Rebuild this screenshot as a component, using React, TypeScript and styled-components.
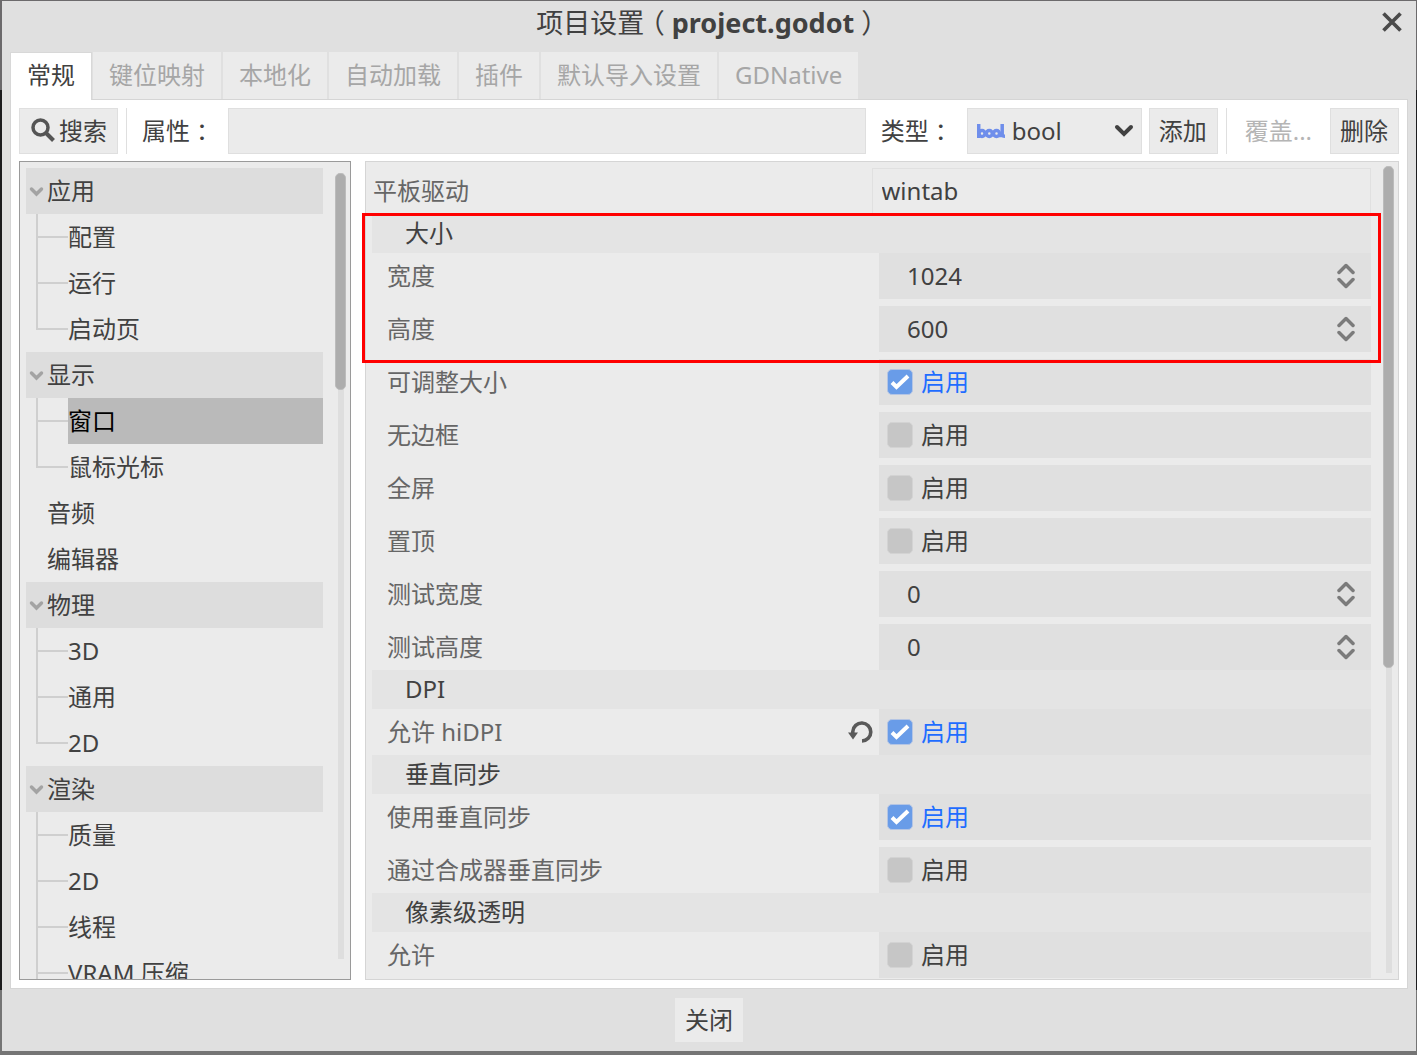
import React, { useState } from "react";
import styled, { createGlobalStyle } from "styled-components";

const FONT = '"Noto Sans", "Noto Sans CJK SC", sans-serif';
const INK = "#414141";

const GlobalStyle = createGlobalStyle`
  *, *::before, *::after { box-sizing: border-box; }
  body {
    margin: 0;
    background: linear-gradient(#6c6a6c 0 90px, #1c1c1e 90px calc(100vh - 65px), #757575 calc(100vh - 65px));
    font-family: ${FONT};
    font-size: 24px;
    line-height: 32px;
    color: ${INK};
  }
  button, input, select { font: inherit; color: inherit; margin: 0; }
  button { cursor: pointer; }
`;

const Screen = styled.div`
  height: 100vh;
  padding: 1px 1px 4px 2px;
`;

const Dialog = styled.div`
  height: 100%;
  display: flex;
  flex-direction: column;
  background: #e0e0e0;
  padding: 0 8px;
`;

const TitleBar = styled.header`
  display: grid;
  grid-template-columns: 32px 1fr 32px;
  align-items: center;
  height: 51px;
  padding-bottom: 8px;
`;

const Title = styled.h1`
  grid-column: 2;
  margin: 0;
  text-align: center;
  font-size: 27px;
  line-height: 36px;
  font-weight: 400;
`;

const Paren = styled.span`
  padding: 0 7px;
  font-family: "Noto Sans CJK SC", sans-serif;
  font-feature-settings: "halt";
`;

const CloseIconButton = styled.button`
  display: flex;
  align-items: center;
  justify-content: center;
  height: 32px;
  padding: 0 0 2px;
  border: 0;
  background: none;
`;

const Tabs = styled.nav`
  display: flex;
  height: 47px;
`;

const Tab = styled.button<{ $active?: boolean }>`
  position: relative;
  height: ${(p) => (p.$active ? 48 : 47)}px;
  margin-right: ${(p) => (p.$active ? 1 : 0)}px;
  padding: 0 16px ${(p) => (p.$active ? 4 : 2)}px;
  border: solid #d8d8d8;
  border-width: ${(p) => (p.$active ? "1px 1px 0" : "0")};
  border-right: ${(p) => (p.$active ? "1px solid #d8d8d8" : "2px solid #e0e0e0")};
  background: ${(p) => (p.$active ? "#fff" : "#ebebeb")};
  color: ${(p) => (p.$active ? INK : "#a6a6a6")};
  white-space: nowrap;
`;

const Page = styled.main`
  flex: 1;
  min-height: 0;
  display: flex;
  flex-direction: column;
  gap: 7px;
  padding: 8px;
  border: 1px solid #d5d5d5;
  background: #fff;
`;

const Toolbar = styled.div`
  display: flex;
  gap: 7px;
  height: 46px;
`;

const Button = styled.button<{ $flat?: boolean }>`
  display: flex;
  align-items: center;
  justify-content: center;
  gap: 4px;
  padding: ${(p) => (p.$flat ? "0 10px" : "0 10px 0 9px")};
  border: 1px solid ${(p) => (p.$flat ? "transparent" : "#dfdfdf")};
  background: ${(p) => (p.$flat ? "none" : "#ebebeb")};
  white-space: nowrap;
  &:disabled { color: #b5b5b5; cursor: default; }
`;

const SearchButton = styled(Button)`
  padding: 0 10px 0 11px;
  svg { margin-top: -2px; }
`;

const Divider = styled.span`
  width: 1px;
  margin-left: 1px;
  background: #dfdfdf;
`;

const FieldLabel = styled.label`
  display: flex;
  align-items: center;
  padding: 0 7px 0 8px;
  white-space: nowrap;
`;

const Colon = styled.span`
  font-family: "Noto Sans CJK TC", sans-serif;
`;

const PropertyInput = styled.input`
  flex: 1;
  min-width: 0;
  padding: 0 9px;
  border: 1px solid #dfdfdf;
  background: #ebebeb;
  outline: none;
`;

const TypeBox = styled.div`
  display: grid;
  grid-template-columns: 46px 1fr 27px;
  align-items: center;
  width: 175px;
  border: 1px solid #dfdfdf;
  background: #ebebeb;
  svg { grid-row: 1; pointer-events: none; }
  svg:first-child { grid-column: 1; justify-self: center; }
  svg:last-child { grid-column: 3; }
`;

const TypeSelect = styled.select`
  grid-area: 1 / 1 / 2 / 4;
  height: 44px;
  padding: 0 32px 0 44px;
  border: 0;
  appearance: none;
  background: none;
  outline: none;
`;

const Panels = styled.div`
  flex: 1;
  min-height: 0;
  display: grid;
  grid-template-columns: 332px minmax(0, 1fr);
  gap: 14px;
`;

const Sidebar = styled.aside`
  display: flex;
  gap: 12px;
  min-height: 0;
  padding: 6px 4px 0 6px;
  border: 1px solid #9a9a9a;
  background: #ebebeb;
  overflow: hidden;
`;

const Tree = styled.div`
  flex: 1;
  min-width: 0;
`;

const GroupRow = styled.button<{ $shaded: boolean }>`
  display: grid;
  grid-template-columns: 21px 1fr;
  align-items: center;
  width: 100%;
  height: 46px;
  padding: 0;
  border: 0;
  text-align: left;
  background: ${(p) => (p.$shaded ? "#dddddd" : "none")};
  span { grid-column: 2; }
`;

const LeafRow = styled.div`
  display: grid;
  grid-template-columns: 32px 1fr;
  height: 46px;
  padding-left: 10px;
`;

const Branch = styled.span<{ $last?: boolean }>`
  display: grid;
  grid-template-rows: 24px 22px;
  &::before {
    content: "";
    border: solid #cfcfcf;
    border-width: 0 0 2px 2px;
  }
  &::after {
    content: "";
    border-left: 2px solid ${(p) => (p.$last ? "transparent" : "#cfcfcf")};
  }
`;

const Leaf = styled.button<{ $selected?: boolean }>`
  padding: 0;
  border: 0;
  text-align: left;
  white-space: nowrap;
  background: ${(p) => (p.$selected ? "#bababa" : "none")};
  color: ${(p) => (p.$selected ? "#000" : INK)};
`;

const Track = styled.div<{ $inset: number; $end: number }>`
  flex: none;
  display: flex;
  justify-content: center;
  width: 11px;
  margin: ${(p) => p.$inset}px 0 ${(p) => p.$end}px;
  background: linear-gradient(#dedede, #dedede) center / 6px 100% no-repeat;
`;

const Thumb = styled.div<{ $share: number }>`
  width: 11px;
  height: ${(p) => p.$share}%;
  border: 1px solid #bcbcbc;
  border-radius: 5px;
  background: #adadad;
`;

const Inspector = styled.section`
  display: flex;
  gap: 12px;
  min-height: 0;
  padding: 4px 4px 0 6px;
  border: 1px solid #d5d5d5;
  background: #ebebeb;
  overflow-x: visible;
  overflow-y: clip;
`;

const Properties = styled.div`
  flex: 1;
  min-width: 0;
  padding-top: 2px;
`;

const Row = styled.div`
  display: grid;
  grid-template-columns: 1fr 1fr;
  height: 46px;
`;

const RowLabel = styled.label`
  display: flex;
  align-items: center;
  color: #666;
`;

const TopRow = styled(Row)`
  ${RowLabel} { padding-left: 1px; }
`;

const TextValue = styled.input`
  width: 100%;
  padding: 0 9px;
  border: 1px solid #e0e0e0;
  background: none;
  outline: none;
`;

const Rows = styled.div`
  display: grid;
  gap: 7px;
  padding-left: 15px;
`;

const MoreRows = styled(Rows)`
  padding-top: 7px;
`;

const Heading = styled.h2`
  margin: 0;
  height: 39px;
  padding: 3px 33px 4px;
  font-size: 24px;
  font-weight: 400;
  background: #e4e4e4;
`;

const Marked = styled.div`
  position: relative;
  &::after {
    content: "";
    position: absolute;
    inset: -1px -10px -11px;
    border: 3px solid #f00;
    pointer-events: none;
  }
`;

const Value = styled.div`
  display: flex;
  align-items: center;
  background: #e0e0e0;
`;

const NumberInput = styled.input`
  flex: 1;
  min-width: 0;
  padding: 0 28px;
  border: 0;
  background: none;
  outline: none;
`;

const Stepper = styled.button`
  display: flex;
  padding: 0 16px 0 0;
  border: 0;
  background: none;
`;

const ResetButton = styled.button`
  display: flex;
  align-items: center;
  padding: 0 6px 0 0;
  margin-left: auto;
  border: 0;
  background: none;
`;

const LabelCell = styled.div`
  display: flex;
`;

const Enable = styled.label<{ $on: boolean }>`
  display: flex;
  align-items: center;
  gap: 8px;
  padding-left: 8px;
  color: ${(p) => (p.$on ? "#1f6dff" : INK)};
`;

const Check = styled.input`
  appearance: none;
  width: 26px;
  height: 26px;
  border-radius: 5px;
  border: 1px solid #d3d3d3;
  background: #c6c6c6;
  &:checked {
    border-color: #b4c5e4;
    background: #699ce8 url("data:image/svg+xml,%3Csvg xmlns='http://www.w3.org/2000/svg' viewBox='0 0 24 24'%3E%3Cpath d='M4 12.5l4.500 4.500L20 6' fill='none' stroke='white' stroke-width='4'/%3E%3C/svg%3E") center / 24px no-repeat;
  }
`;

const Footer = styled.footer`
  display: flex;
  justify-content: center;
  padding: 9px 0;
`;

const FooterButton = styled(Button)`
  height: 44px;
  border-color: #ebebeb;
  padding: 0 9px;
`;

const SearchIcon = () => (
  <svg width="24" height="24" viewBox="0 0 24 24" fill="none" stroke="#555" aria-hidden="true">
    <circle cx="9.500" cy="9.500" r="7.500" strokeWidth="3.500" />
    <path d="M14.500 14.500l8 8" strokeWidth="4" />
  </svg>
);

const BoolIcon = () => (
  <svg width="28" height="15" viewBox="0 0 28 15" fill="none" stroke="#6f8eeb" strokeWidth="3.500" aria-hidden="true">
    <path d="M1.700 0v14M25.200 0v10q0 2.300 2.800 2.300" />
    <circle cx="5" cy="9.500" r="3" />
    <circle cx="12.300" cy="9.500" r="3" />
    <circle cx="19.500" cy="9.500" r="3" />
    <path d="M22 11.500h4" />
  </svg>
);

const Chevron = () => (
  <svg width="20" height="14" viewBox="0 0 20 14" fill="none" stroke={INK} strokeWidth="4" strokeLinecap="round" aria-hidden="true">
    <path d="M3 3l7 7 7-7" />
  </svg>
);

const FoldArrow = () => (
  <svg width="21" height="12" viewBox="0 0 21 12" fill="none" stroke="#a3a3a3" strokeWidth="3.500" strokeLinecap="round" aria-hidden="true">
    <path d="M5.500 4l5 5 5-5" />
  </svg>
);

const UpDown = () => (
  <svg width="18" height="26" viewBox="0 0 18 26" fill="none" stroke="#7b7b7b" strokeWidth="3.500" strokeLinecap="round" strokeLinejoin="round" aria-hidden="true">
    <path d="M2 9.500L9 2.500l7 7M2 16.500l7 7 7-7" />
  </svg>
);

const ResetIcon = () => (
  <svg width="25" height="24" viewBox="0 0 25 24" fill="none" aria-hidden="true">
    <path d="M4.800 13V11.500a9 9 0 1 1 9.200 9.500" stroke="#595959" strokeWidth="3.600" />
    <path d="M0 12.500h10l-5 7z" fill="#595959" />
  </svg>
);

const CloseIcon = () => (
  <svg width="20" height="20" viewBox="0 0 20 20" fill="none" stroke="#4a4a4a" strokeWidth="3.700" aria-hidden="true">
    <path d="M1.500 1.500l17 17M18.500 1.500l-17 17" />
  </svg>
);

const TABS = ["常规", "键位映射", "本地化", "自动加载", "插件", "默认导入设置", "GDNative"];

const TREE: { name: string; children: string[]; continues?: boolean }[] = [
  { name: "应用", children: ["配置", "运行", "启动页"] },
  { name: "显示", children: ["窗口", "鼠标光标"] },
  { name: "音频", children: [] },
  { name: "编辑器", children: [] },
  { name: "物理", children: ["3D", "通用", "2D"] },
  { name: "渲染", children: ["质量", "2D", "线程", "VRAM 压缩"], continues: true },
];

function NumberRow({ id, label, value }: { id: string; label: string; value: string }) {
  return (
    <Row>
      <RowLabel htmlFor={id}>{label}</RowLabel>
      <Value>
        <NumberInput id={id} inputMode="numeric" defaultValue={value} />
        <Stepper type="button" aria-label={label}>
          <UpDown />
        </Stepper>
      </Value>
    </Row>
  );
}

function BoolRow({ id, label, on = false, reset = false }: { id: string; label: string; on?: boolean; reset?: boolean }) {
  const [checked, setChecked] = useState(on);
  return (
    <Row>
      <LabelCell>
        <RowLabel htmlFor={id}>{label}</RowLabel>
        {reset && (
          <ResetButton type="button" aria-label="重置" onClick={() => setChecked(!on)}>
            <ResetIcon />
          </ResetButton>
        )}
      </LabelCell>
      <Value>
        <Enable $on={checked}>
          <Check id={id} type="checkbox" checked={checked} onChange={(e) => setChecked(e.target.checked)} />
          启用
        </Enable>
      </Value>
    </Row>
  );
}

export default function App() {
  const [tab, setTab] = useState("常规");
  const [selected, setSelected] = useState("窗口");

  return (
    <Screen>
      <GlobalStyle />
      <Dialog role="dialog" aria-labelledby="dialog-title">
        <TitleBar>
          <Title id="dialog-title">
            项目设置<Paren>（</Paren>
            <b>project.godot</b>
            <Paren>）</Paren>
          </Title>
          <CloseIconButton type="button" aria-label="关闭">
            <CloseIcon />
          </CloseIconButton>
        </TitleBar>
        <Tabs>
          {TABS.map((name) => (
            <Tab key={name} type="button" $active={name === tab} onClick={() => setTab(name)}>
              {name}
            </Tab>
          ))}
        </Tabs>
        <Page>
          <Toolbar>
            <SearchButton type="button">
              <SearchIcon />
              搜索
            </SearchButton>
            <Divider />
            <FieldLabel htmlFor="property">
              属性<Colon>：</Colon>
            </FieldLabel>
            <PropertyInput id="property" />
            <FieldLabel htmlFor="type">
              类型<Colon>：</Colon>
            </FieldLabel>
            <TypeBox>
              <BoolIcon />
              <TypeSelect id="type" defaultValue="bool">
                <option>bool</option>
                <option>int</option>
                <option>float</option>
              </TypeSelect>
              <Chevron />
            </TypeBox>
            <Button type="button">添加</Button>
            <Divider />
            <Button type="button" $flat disabled>
              覆盖...
            </Button>
            <Button type="button">删除</Button>
          </Toolbar>
          <Panels>
            <Sidebar>
              <Tree>
                {TREE.map((group) => (
                  <React.Fragment key={group.name}>
                    <GroupRow type="button" $shaded={group.children.length > 0}>
                      {group.children.length > 0 && <FoldArrow />}
                      <span>{group.name}</span>
                    </GroupRow>
                    {group.children.map((child, i) => (
                      <LeafRow key={child}>
                        <Branch $last={!group.continues && i === group.children.length - 1} />
                        <Leaf type="button" $selected={child === selected} onClick={() => setSelected(child)}>
                          {child}
                        </Leaf>
                      </LeafRow>
                    ))}
                  </React.Fragment>
                ))}
              </Tree>
              <Track $inset={5} $end={20}>
                <Thumb $share={27.6} />
              </Track>
            </Sidebar>
            <Inspector>
              <Properties>
                <TopRow>
                  <RowLabel htmlFor="tablet">平板驱动</RowLabel>
                  <TextValue id="tablet" defaultValue="wintab" />
                </TopRow>
                <Marked>
                  <Heading>大小</Heading>
                  <Rows>
                    <NumberRow id="width" label="宽度" value="1024" />
                    <NumberRow id="height" label="高度" value="600" />
                  </Rows>
                </Marked>
                <MoreRows>
                  <BoolRow id="resizable" label="可调整大小" on />
                  <BoolRow id="borderless" label="无边框" />
                  <BoolRow id="fullscreen" label="全屏" />
                  <BoolRow id="ontop" label="置顶" />
                  <NumberRow id="test-width" label="测试宽度" value="0" />
                  <NumberRow id="test-height" label="测试高度" value="0" />
                </MoreRows>
                <Heading>DPI</Heading>
                <Rows>
                  <BoolRow id="hidpi" label="允许 hiDPI" on reset />
                </Rows>
                <Heading>垂直同步</Heading>
                <Rows>
                  <BoolRow id="vsync" label="使用垂直同步" on />
                  <BoolRow id="compositor" label="通过合成器垂直同步" />
                </Rows>
                <Heading>像素级透明</Heading>
                <Rows>
                  <BoolRow id="allowed" label="允许" />
                </Rows>
              </Properties>
              <Track $inset={0} $end={6}>
                <Thumb $share={62.2} />
              </Track>
            </Inspector>
          </Panels>
        </Page>
        <Footer>
          <FooterButton type="button">关闭</FooterButton>
        </Footer>
      </Dialog>
    </Screen>
  );
}
